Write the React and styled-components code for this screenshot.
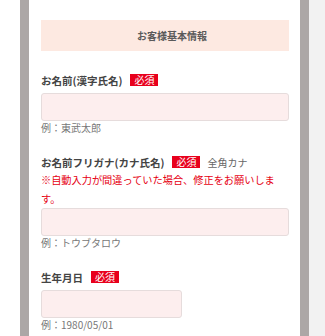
import React from 'react'
import styled, { createGlobalStyle } from 'styled-components'

const GlobalStyle = createGlobalStyle`
  html, body {
    margin: 0;
    padding: 0;
    background: #fff;
  }
  body {
    font-family: "Noto Sans CJK JP", "Noto Sans", sans-serif;
  }
`

const Page = styled.div`
  display: flex;
  height: 336px;
  overflow: hidden;
`

const Gutter = styled.div`
  flex: 0 0 20px;
  background: #fff;
`

const Side = styled.div`
  flex: 1;
  background: #f2f2f2;
`

const Frame = styled.div`
  flex: 0 0 289px;
  box-sizing: border-box;
  border-left: 9px solid #aca7a6;
  border-right: 9px solid #aca7a6;
  background: #fff;
  padding: 20px 11px 0 12px;
`

const SectionTitle = styled.div`
  height: 31px;
  background: #fde9e1;
  display: flex;
  align-items: center;
  justify-content: center;
  padding-left: 14px;
  font-size: 10px;
  font-weight: bold;
  color: #5a5a5a;
  margin-bottom: 21px;
`

const Field = styled.div`
  margin-bottom: 19px;
`

const Label = styled.div`
  display: flex;
  align-items: center;
  gap: 8px;
  height: 16px;
  margin-bottom: ${p => (p.$tight ? 0 : 5)}px;
  font-size: 10.5px;
  font-weight: bold;
  color: #444;
`

const Required = styled.span`
  display: inline-block;
  background: #e8001c;
  color: #fff;
  font-size: 10px;
  font-weight: normal;
  line-height: 12px;
  padding: 0 4px;
`

const Hint = styled.span`
  font-size: 10px;
  font-weight: normal;
  color: #666;
  margin-left: -1px;
`

const Note = styled.p`
  margin: 0;
  font-size: 10.2px;
  line-height: 19px;
  color: #e60012;
`

const Input = styled.input`
  display: block;
  box-sizing: border-box;
  width: ${p => p.$width || '100%'};
  height: 28px;
  background: #fdeeee;
  border: 1px solid #e6dcdc;
  border-radius: 3px;
  outline: none;
`

const Example = styled.div`
  font-size: 10px;
  line-height: 14px;
  color: #777;
`

export default function App() {
  return (
    <>
      <GlobalStyle />
      <Page>
        <Gutter />
        <Frame>
          <SectionTitle>お客様基本情報</SectionTitle>

          <Field>
            <Label>
              お名前(漢字氏名)
              <Required>必須</Required>
            </Label>
            <Input />
            <Example>例：東武太郎</Example>
          </Field>

          <Field>
            <Label $tight>
              お名前フリガナ(カナ氏名)
              <Required>必須</Required>
              <Hint>全角カナ</Hint>
            </Label>
            <Note>※自動入力が間違っていた場合、修正をお願いします。</Note>
            <Input />
            <Example>例：トウブタロウ</Example>
          </Field>

          <Field>
            <Label>
              生年月日
              <Required>必須</Required>
            </Label>
            <Input $width="141px" />
            <Example>例：1980/05/01</Example>
          </Field>
        </Frame>
        <Side />
      </Page>
    </>
  )
}
